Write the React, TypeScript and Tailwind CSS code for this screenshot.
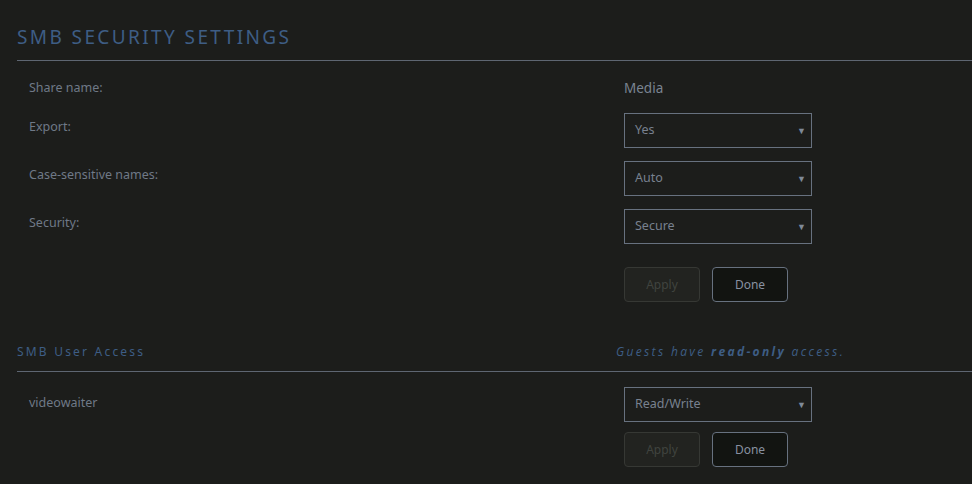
const font = { fontFamily: '"Noto Sans", "Open Sans", sans-serif' }

function Select({ value }: { value: string }) {
  return (
    <div className="relative flex h-[35px] w-[188px] items-center border border-[#67717f] pl-[10px] text-[12.5px] text-[#78818f]">
      {value}
      <span className="absolute right-[5px] top-[12px] text-[9px] leading-none text-[#7f8998]">▼</span>
    </div>
  )
}

function Buttons() {
  return (
    <div className="flex gap-[12px]">
      <button className="h-[35px] w-[76px] rounded-[4px] border border-[#363834] bg-[#222320] text-[12px] text-[#40433f]">
        Apply
      </button>
      <button className="h-[35px] w-[76px] rounded-[4px] border border-[#67717f] bg-[#121411] text-[12px] text-[#8891a0]">
        Done
      </button>
    </div>
  )
}

function Row({ label, children, pad = 'pt-[5px]' }: { label: string; children: React.ReactNode; pad?: string }) {
  return (
    <div className="grid grid-cols-[595px_1fr] pl-[12px]">
      <div className={`${pad} text-[12.5px] text-[#6f7987]`}>{label}</div>
      <div>{children}</div>
    </div>
  )
}

export default function App() {
  return (
    <main className="h-[484px] w-full overflow-hidden bg-[#1c1d1b] pl-[17px]" style={font}>
      {/* security settings */}
      <h1 className="pt-[24px] text-[19px] leading-[26px] tracking-[2.4px] text-[#3e5d85]">SMB SECURITY SETTINGS</h1>
      <div className="mt-[10px] border-t border-[#5e6672]" />

      <div className="pt-[17px]">
        <div className="grid grid-cols-[595px_1fr] items-center pl-[12px] text-[12.5px] text-[#6f7987]">
          <div className="pt-[1px]">Share name:</div>
          <div className="text-[13.5px] text-[#7a8492]">Media</div>
        </div>
        <div className="mt-[15px] flex flex-col gap-[13px]">
          <Row label="Export:">
            <Select value="Yes" />
          </Row>
          <Row label="Case-sensitive names:">
            <Select value="Auto" />
          </Row>
          <Row label="Security:">
            <Select value="Secure" />
          </Row>
          <Row label="">
            <div className="pt-[10px]">
              <Buttons />
            </div>
          </Row>
        </div>
      </div>

      {/* user access */}
      <div className="mt-[41px] grid grid-cols-[599px_1fr] items-end">
        <h2 className="text-[12px] tracking-[2.2px] text-[#3e5d85]">SMB User Access</h2>
        <p className="text-[12px] italic tracking-[2.35px] text-[#3e5d85]" style={{ fontFamily: '"Open Sans", sans-serif' }}>
          Guests have <b>read-only</b> access.
        </p>
      </div>
      <div className="mt-[10px] border-t border-[#5e6672]" />

      <div className="mt-[15px] flex flex-col gap-[10px]">
        <Row label="videowaiter" pad="pt-[7px]">
          <Select value="Read/Write" />
        </Row>
        <Row label="">
          <Buttons />
        </Row>
      </div>
    </main>
  )
}
